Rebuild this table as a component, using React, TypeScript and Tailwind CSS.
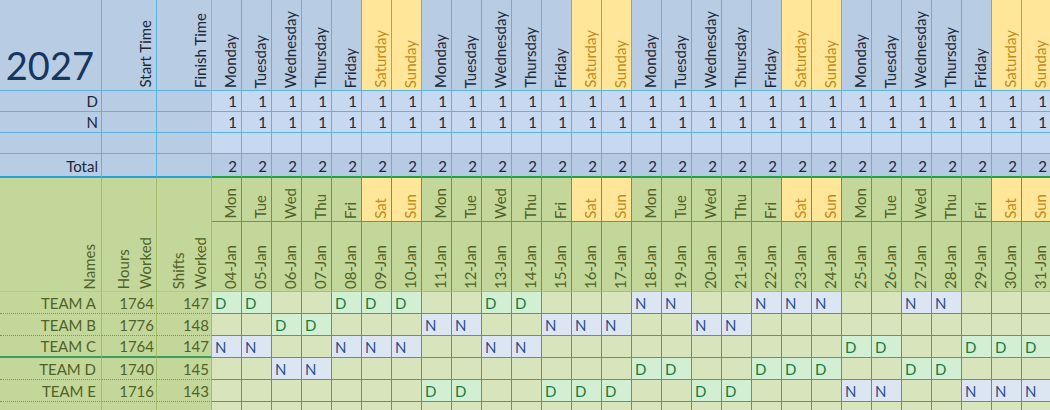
import React from 'react';

const DAYS = ['Monday', 'Tuesday', 'Wednesday', 'Thursday', 'Friday', 'Saturday', 'Sunday'];
const SHORT = ['Mon', 'Tue', 'Wed', 'Thu', 'Fri', 'Sat', 'Sun'];

const cols = Array.from({ length: 28 }, (_, i) => ({
  day: DAYS[i % 7],
  short: SHORT[i % 7],
  num: i + 4,
  date: `${String(i + 4).padStart(2, '0')}-Jan`,
  weekend: i % 7 >= 5,
}));

const teams = [
  { name: 'TEAM A', hours: '1764', shifts: '147', D: [4, 5, 8, 9, 10, 13, 14], N: [18, 19, 22, 23, 24, 27, 28] },
  { name: 'TEAM B', hours: '1776', shifts: '148', D: [6, 7], N: [11, 12, 15, 16, 17, 20, 21] },
  { name: 'TEAM C', hours: '1764', shifts: '147', D: [25, 26, 29, 30, 31], N: [4, 5, 8, 9, 10, 13, 14] },
  { name: 'TEAM D', hours: '1740', shifts: '145', D: [18, 19, 22, 23, 24, 27, 28], N: [6, 7] },
  { name: 'TEAM E', hours: '1716', shifts: '143', D: [11, 12, 15, 16, 17, 20, 21], N: [25, 26, 29, 30, 31] },
  { name: '', hours: '', shifts: '', D: [] as number[], N: [] as number[] },
];

function Vert({ children, className, lead = 'leading-[17px]' }: { children: React.ReactNode; className: string; lead?: string }) {
  return (
    <div className={`flex items-end justify-end border-r border-b pb-[2px] ${className}`}>
      <span className={`[writing-mode:vertical-rl] rotate-180 whitespace-nowrap ${lead}`}>{children}</span>
    </div>
  );
}

export default function App() {
  return (
    <div className="w-[1050px] h-[410px] overflow-hidden bg-white font-['Lato',sans-serif] text-[15px]">
      <div className="grid grid-cols-[102px_55px_55px_repeat(28,30px)] grid-rows-[91px_21px_21px_21px_24px_44px_70px_repeat(6,22px)]">
        {/* top header */}
        <div className="flex items-end justify-end border-r border-b border-[#58b4e0] bg-[#b8cce4] pr-[7px] pb-[6px] text-[38px] leading-[38px] text-[#17365d]">
          2027
        </div>
        <Vert className="border-[#58b4e0] bg-[#b8cce4] pr-[2px] text-[#1c2838]">Start Time</Vert>
        <Vert className="border-b-[#58b4e0] border-r-[#9fb0c6] bg-[#b8cce4] pr-[2px] text-[#1c2838]">Finish Time</Vert>
        {cols.map((c) => (
          <Vert
            key={'h' + c.num}
            className={`border-[#58b4e0] pr-[2px] ${c.weekend ? 'bg-[#ffe699] text-[#c28a1a]' : 'bg-[#b8cce4] text-[#1c2838]'}`}
          >
            {c.day}
          </Vert>
        ))}

        {/* D / N / blank rows */}
        {['D', 'N', ''].map((label) => (
          <React.Fragment key={'r' + label}>
            <div className="flex items-end justify-end border-r border-b border-[#58b4e0] bg-[#b8cce4] pr-[3px] pb-[1px] leading-[17px] text-[#1c2838]">
              {label}
            </div>
            <div className="border-r border-b border-[#58b4e0] bg-[#b8cce4]" />
            <div className="border-r border-b border-b-[#58b4e0] border-r-[#9fb0c6] bg-[#b8cce4]" />
            {cols.map((c) => (
              <div
                key={label + c.num}
                className="flex items-end justify-end border-r border-b border-[#58b4e0] bg-[#c6d9f0] pr-[4px] pb-[1px] leading-[17px] text-[#1c2838]"
              >
                {label ? '1' : ''}
              </div>
            ))}
          </React.Fragment>
        ))}

        {/* total row */}
        <div className="flex items-end justify-end border-r border-b-2 border-r-[#58b4e0] border-b-[#2a9fd8] bg-[#b8cce4] pr-[3px] pb-[1px] leading-[17px] text-[#1c2838]">
          Total
        </div>
        <div className="border-r border-b-2 border-r-[#58b4e0] border-b-[#2a9fd8] bg-[#b8cce4]" />
        <div className="border-r border-b-2 border-r-[#9fb0c6] border-b-[#2a9fd8] bg-[#b8cce4]" />
        {cols.map((c) => (
          <div
            key={'t' + c.num}
            className="flex items-end justify-end border-r border-b-2 border-r-[#58b4e0] border-b-[#21a04a] bg-[#b6cae3] pr-[4px] pb-[1px] leading-[17px] text-[#1c2838]"
          >
            2
          </div>
        ))}

        {/* green header */}
        <Vert className="row-span-2 border-r-[#a3bd68] border-b-[#b5cc85] bg-[#c4d79b] pr-[3px] text-[#4f6228]">Names</Vert>
        <Vert lead="leading-[22px]" className="row-span-2 border-r-[#a3bd68] border-b-[#b5cc85] bg-[#c4d79b] text-[#4f6228]">
          Hours
          <br />
          Worked
        </Vert>
        <Vert lead="leading-[22px]" className="row-span-2 border-r-[#a3bd68] border-b-[#b5cc85] bg-[#c4d79b] text-[#4f6228]">
          Shifts
          <br />
          Worked
        </Vert>
        {cols.map((c) => (
          <Vert
            key={'s' + c.num}
            className={`border-[#45a85f] pr-[2px] ${c.weekend ? 'bg-[#ffe699] text-[#c28a1a]' : 'bg-[#c4d79b] text-[#4f6228]'}`}
          >
            {c.short}
          </Vert>
        ))}
        {cols.map((c) => (
          <Vert key={'d' + c.num} className="border-r-[#45a85f] border-b-[#9cc47a] bg-[#c4d79b] pr-[2px] text-[#4f6228]">
            {c.date}
          </Vert>
        ))}

        {/* team rows */}
        {teams.map((t, r) => {
          const line =
            r === 2
              ? 'border-b-2 border-b-[#3a9f5a]'
              : 'border-b [border-bottom-style:dotted] border-b-[#4caf50]';
          return (
            <React.Fragment key={'team' + r}>
              <div className={`flex items-end justify-end border-r border-r-[#a3bd68] bg-[#c4d79b] pr-[5px] pb-[1px] leading-[17px] text-[#4f6228] ${line}`}>
                {t.name}
              </div>
              <div className={`flex items-end justify-end border-r border-r-[#a3bd68] bg-[#c4d79b] pr-[2px] pb-[1px] leading-[17px] text-[#4f6228] ${line}`}>
                {t.hours}
              </div>
              <div className={`flex items-end justify-end border-r border-r-[#a3bd68] bg-[#c4d79b] pr-[2px] pb-[1px] leading-[17px] text-[#4f6228] ${line}`}>
                {t.shifts}
              </div>
              {cols.map((c) => {
                const v = t.D.includes(c.num) ? 'D' : t.N.includes(c.num) ? 'N' : '';
                return (
                  <div
                    key={r + '-' + c.num}
                    className={`flex items-end border-r border-b border-[#45a85f] pl-[3px] pb-[1px] leading-[17px] ${
                      v === 'D'
                        ? 'bg-[#d3efd3] text-[#217a3c]'
                        : v === 'N'
                        ? 'bg-[#dce6f2] text-[#2b4e8c]'
                        : 'bg-[#d8e4bc]'
                    }`}
                  >
                    {v}
                  </div>
                );
              })}
            </React.Fragment>
          );
        })}
      </div>
    </div>
  );
}
